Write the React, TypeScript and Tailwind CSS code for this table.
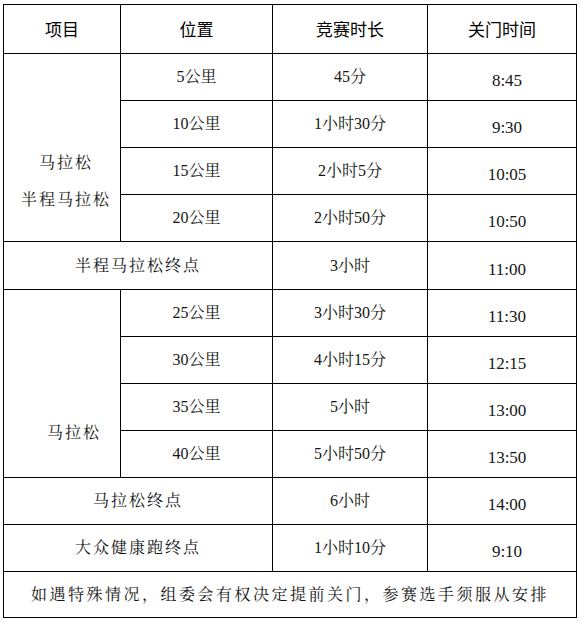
import React from "react";

const serif = "font-['Liberation_Serif','Noto_Serif_CJK_SC','Noto_Sans_CJK_SC',serif]";

type Row = [string, string, string];

const group1: Row[] = [
  ["5公里", "45分", "8:45"],
  ["10公里", "1小时30分", "9:30"],
  ["15公里", "2小时5分", "10:05"],
  ["20公里", "2小时50分", "10:50"],
];

const group2: Row[] = [
  ["25公里", "3小时30分", "11:30"],
  ["30公里", "4小时15分", "12:15"],
  ["35公里", "5小时", "13:00"],
  ["40公里", "5小时50分", "13:50"],
];

const cell = "border border-black p-0 text-center align-middle";
const timeCell = `${cell} pl-[10px] pt-[8px] text-[17px]`;

function DataCells({ r }: { r: Row }) {
  return (
    <>
      <td className={cell}>{r[0]}</td>
      <td className={cell}>{r[1]}</td>
      <td className={timeCell}>{r[2]}</td>
    </>
  );
}

export default function App() {
  return (
    <div className="bg-white w-[581px] h-[623px] pt-[4px] pl-[3px]">
      <table
        className={`border-collapse table-fixed w-[573px] text-[16px] text-[#151515] ${serif}`}
      >
        <colgroup>
          <col className="w-[117px]" />
          <col className="w-[152px]" />
          <col className="w-[155px]" />
          <col className="w-[149px]" />
        </colgroup>
        <tbody>
          <tr className="h-[49px] font-['Noto_Sans_CJK_SC',sans-serif] text-[17px] text-black">
            <td className={cell}>项目</td>
            <td className={cell}>位置</td>
            <td className={cell}>竞赛时长</td>
            <td className={cell}>关门时间</td>
          </tr>
          {group1.map((r, i) => (
            <tr key={r[0]} className="h-[47px]">
              {i === 0 && (
                <td
                  rowSpan={4}
                  className="border border-black p-0 pt-[90px] pl-[8px] text-center align-top leading-[37px] tracking-[2px]"
                >
                  <div>马拉松</div>
                  <div>半程马拉松</div>
                </td>
              )}
              <DataCells r={r} />
            </tr>
          ))}
          <tr className="h-[48px]">
            <td colSpan={2} className={`${cell} tracking-[2px]`}>
              半程马拉松终点
            </td>
            <td className={cell}>3小时</td>
            <td className={timeCell}>11:00</td>
          </tr>
          {group2.map((r, i) => (
            <tr key={r[0]} className="h-[47px]">
              {i === 0 && (
                <td
                  rowSpan={4}
                  className="border border-black p-0 pt-[124px] pl-[24px] text-center align-top leading-[37px] tracking-[2px]"
                >
                  马拉松
                </td>
              )}
              <DataCells r={r} />
            </tr>
          ))}
          <tr className="h-[47px]">
            <td colSpan={2} className={`${cell} tracking-[2px]`}>
              马拉松终点
            </td>
            <td className={cell}>6小时</td>
            <td className={timeCell}>14:00</td>
          </tr>
          <tr className="h-[47px]">
            <td colSpan={2} className={`${cell} tracking-[2px]`}>
              大众健康跑终点
            </td>
            <td className={cell}>1小时10分</td>
            <td className={timeCell}>9:10</td>
          </tr>
          <tr className="h-[46px]">
            <td colSpan={4} className={`${cell} tracking-[2.5px]`}>
              如遇特殊情况，组委会有权决定提前关门，参赛选手须服从安排
            </td>
          </tr>
        </tbody>
      </table>
    </div>
  );
}
